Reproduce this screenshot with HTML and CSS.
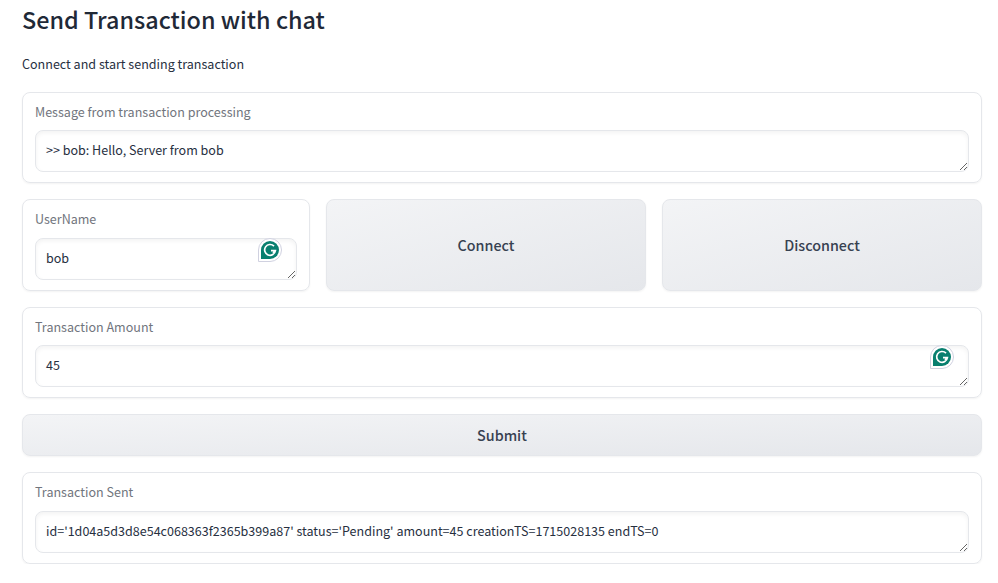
FILE: index.html
```html
<!DOCTYPE html>
<html lang="en">
<head>
<meta charset="utf-8">
<title>Send Transaction with chat</title>
<link rel="stylesheet" href="styles.css">
</head>
<body>
<main class="page">
  <h1>Send Transaction with chat</h1>
  <p class="intro">Connect and start sending transaction</p>
  <section class="card">
    <label for="message">Message from transaction processing</label>
    <div class="field"><textarea id="message" rows="1" spellcheck="false">&gt;&gt; bob: Hello, Server from bob</textarea></div>
  </section>
  <div class="row">
    <section class="card tall">
      <label for="user">UserName</label>
      <div class="field"><textarea id="user" rows="1" spellcheck="false">bob</textarea>
        <svg class="badge" viewBox="0 0 24 24"><path d="M.5 23.5V12A11.5 11.5 0 1 1 12 23.5Z" fill="#fff" stroke="#d0d1e0"/><path d="M3 21v-9a9 9 0 1 1 9 9Z" fill="#087f6f"/><path d="M16 8.2A5.4 5.4 0 1 0 17.4 12.7H13M15 15l2.4-2.3" fill="none" stroke="#fff" stroke-width="1.7"/></svg>
      </div>
    </section>
    <button>Connect</button>
    <button>Disconnect</button>
  </div>
  <section class="card">
    <label for="amount">Transaction Amount</label>
    <div class="field"><textarea id="amount" rows="1" spellcheck="false">45</textarea>
      <svg class="badge" viewBox="0 0 24 24"><path d="M.5 23.5V12A11.5 11.5 0 1 1 12 23.5Z" fill="#fff" stroke="#d0d1e0"/><path d="M3 21v-9a9 9 0 1 1 9 9Z" fill="#087f6f"/><path d="M16 8.2A5.4 5.4 0 1 0 17.4 12.7H13M15 15l2.4-2.3" fill="none" stroke="#fff" stroke-width="1.7"/></svg>
    </div>
  </section>
  <button class="submit">Submit</button>
  <section class="card tall">
    <label for="sent">Transaction Sent</label>
    <div class="field"><textarea id="sent" rows="1" spellcheck="false">id='1d04a5d3d8e54c068363f2365b399a87' status='Pending' amount=45 creationTS=1715028135 endTS=0</textarea></div>
  </section>
</main>
</body>
</html>
```
FILE: styles.css
```css
*{box-sizing:border-box}
body{margin:0;background:#fff;color:#1f2937;font-family:"Noto Sans CJK SC",sans-serif}
.page{padding:2px 16px 0 22px}
h1{margin:0;font-size:23.38px;line-height:34px;font-weight:500}
.intro{margin:17px 0;font-size:12.54px;line-height:22px;color:#27303f}
.card{height:91px;padding:11px 12px 12px;border:1px solid #e5e7eb;border-radius:8px;box-shadow:0 1px 2px #0000000d}
label{display:block;height:17px;margin-bottom:9px;font-size:12.54px;line-height:16px;color:#71757d}
.field{position:relative;height:42px}
textarea{display:block;width:100%;height:42px;padding:8px 10px;border:1px solid #e5e7eb;border-radius:8px;background:#fff;color:#27303f;font:12.54px/21px "Noto Sans CJK SC",sans-serif;box-shadow:inset 0 2px 4px #0000000d;overflow:hidden;resize:vertical}
.row{display:grid;grid-template-columns:288px 320px 320px;gap:16px;margin:16px 0;height:92px}
.tall{height:92px}
.tall label{margin-bottom:10px}
button{padding:0 6px 2px;border:1px solid #e5e7eb;border-radius:8px;background:linear-gradient(to bottom right,#f3f4f6,#e5e7eb);color:#374151;font:500 14.3px "Noto Sans CJK SC",sans-serif;box-shadow:0 1px 2px #0000000d}
.submit{display:block;width:100%;height:42px;margin:16px 0}
.badge{position:absolute;right:15px;top:0;width:24px;height:24px}
```
